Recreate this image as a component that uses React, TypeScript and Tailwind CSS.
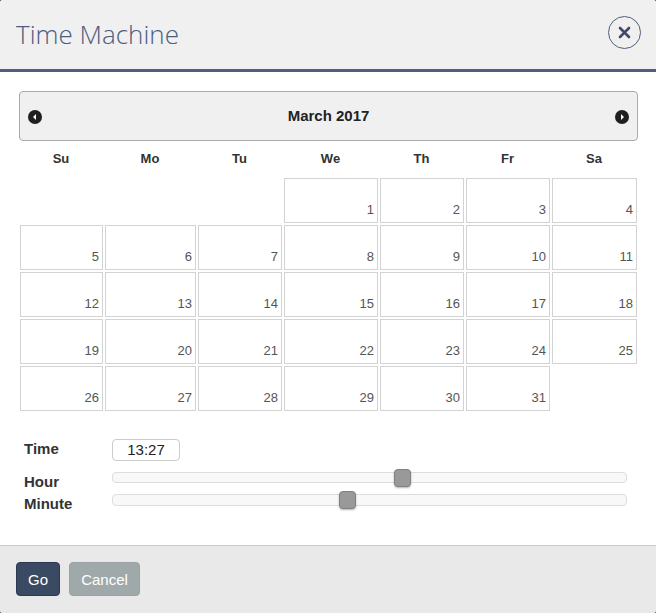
const weekDays = ['Su', 'Mo', 'Tu', 'We', 'Th', 'Fr', 'Sa'];

// leading blanks for March 2017
const cells: (number | null)[] = [null, null, null];
for (let d = 1; d <= 31; d++) cells.push(d);

const gridCols = 'grid grid-cols-[83px_91px_84px_94px_84px_84px_85px] gap-x-[2px]';

function NavArrow({ dir }: { dir: 'left' | 'right' }) {
  return (
    <svg width="14" height="14" viewBox="0 0 14 14" className="mt-[2px]">
      <circle cx="7" cy="7" r="7" fill="#1f1f1f" />
      {dir === 'left' ? <path d="M8 4 L5 7 L8 10 Z" fill="#fff" /> : <path d="M6 4 L9 7 L6 10 Z" fill="#fff" />}
    </svg>
  );
}

function Slider({ handleLeft, height }: { handleLeft: string; height: string }) {
  return (
    <div className={`relative w-[515px] rounded-[4px] border border-[#dddddd] bg-[#f8f8f8] ${height}`}>
      <div className={`absolute top-1/2 -translate-y-1/2 h-[18px] w-[17px] rounded-[4px] border border-[#808080] bg-[#999999] shadow-[0_1px_2px_rgba(0,0,0,0.3)] ${handleLeft}`} />
    </div>
  );
}

export default function App() {
  return (
    <div className="w-[656px] h-[613px] bg-[#555555]">
      <div className="w-full h-full overflow-hidden rounded-[3px] flex flex-col bg-white font-['Liberation_Sans',sans-serif] text-[#222222]">
        {/* Header */}
        <div className="h-[72px] shrink-0 flex items-center justify-between pl-4 pr-[15px] bg-[#f0f0f0] border-b-[3px] border-[#4f5f80]">
          <h1 className="font-['Open_Sans',sans-serif] font-light text-[26px] leading-none text-[#4c5d80] -mt-[1px]">Time Machine</h1>
          <button className="w-[33px] h-[33px] -mt-[5px] rounded-full border border-[#4f5f80] flex items-center justify-center">
            <svg width="13" height="13" viewBox="0 0 13 13">
              <path d="M2 2 L11 11 M11 2 L2 11" stroke="#3d4c68" strokeWidth="2.6" strokeLinecap="round" fill="none" />
            </svg>
          </button>
        </div>

        {/* Calendar */}
        <div className="h-[473px] shrink-0 pl-[19px] pt-[19px]">
          <div className="w-[619px] h-[50px] flex items-center justify-between pl-[8px] pr-[8px] rounded-[4px] border border-[#aaaaaa] bg-[#f0f0f0]">
            <NavArrow dir="left" />
            <span className="text-[15px] font-bold text-[#222222]">March 2017</span>
            <NavArrow dir="right" />
          </div>

          <div className={`${gridCols} ml-[1px] mt-[8px] h-[29px]`}>
            {weekDays.map((d) => (
              <div key={d} className="text-center pr-[1px] text-[13px] font-bold leading-[20px] text-[#333333]">{d}</div>
            ))}
          </div>

          <div className={`${gridCols} gap-y-[2px] ml-[1px]`}>
            {cells.map((d, i) =>
              d === null ? (
                <div key={i} />
              ) : (
                <div key={i} className="h-[45px] border border-[#d3d3d3] flex items-end justify-end pr-[3px] pb-[2px] text-[13px] leading-[20px] text-[#555555]">
                  {d}
                </div>
              )
            )}
          </div>

          {/* Time controls */}
          <div className="mt-[28px] ml-[5px] flex">
            <div className="w-[88px] text-[15px] font-bold text-[#333333]">
              <div className="h-[32px] leading-[20px]">Time</div>
              <div className="leading-[22px]">Hour</div>
              <div className="leading-[22px]">Minute</div>
            </div>
            <div>
              <div className="w-[68px] h-[22px] rounded-[4px] border border-[#cccccc] text-center text-[15px] leading-[20px] text-[#222222]">13:27</div>
              <div className="mt-[11px] flex flex-col gap-[11px]">
                <Slider handleLeft="left-[281px]" height="h-[11px]" />
                <Slider handleLeft="left-[226px]" height="h-[12px]" />
              </div>
            </div>
          </div>
        </div>

        {/* Footer */}
        <div className="flex-1 flex items-start gap-[9px] pl-4 pt-[16px] bg-[#e9e9e9] border-t border-[#c8c8c8]">
          <button className="w-[44px] h-[34px] pt-[2px] rounded-[4px] border border-[#2c3850] bg-[#3b4a63] text-[15px] text-white">Go</button>
          <button className="w-[71px] h-[34px] pt-[2px] rounded-[4px] border border-[#9aa3a3] bg-[#a0a9a9] text-[15px] text-white">Cancel</button>
        </div>
      </div>
    </div>
  );
}
